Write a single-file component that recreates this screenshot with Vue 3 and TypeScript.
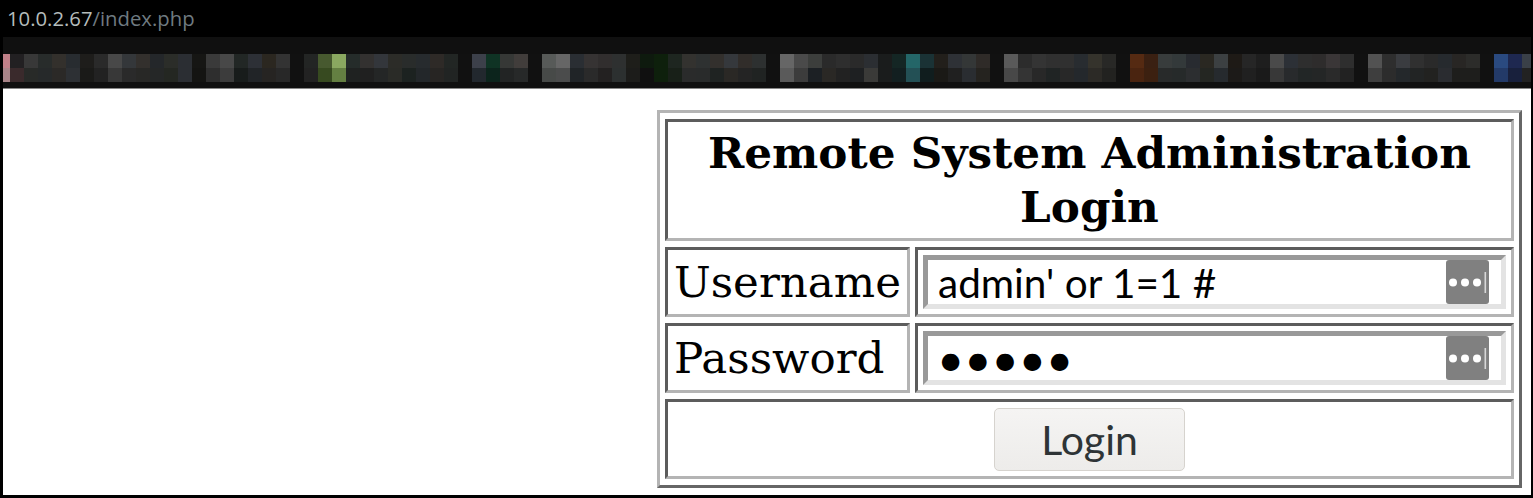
<script setup lang="ts">
const tabColumns: [string, string][] = [
  ['#222022', '#3a2a2c'], ['#383838', '#282a28'], ['#282c2b', '#26292a'], ['#33302c', '#2b2927'],
  ['#282c30', '#2d3034'], ['#1e1d1b', '#1a1a18'], ['#2a2a2a', '#222222'], ['#484848', '#383838'],
  ['#34373a', '#2a2a2a'], ['#33302d', '#282826'], ['#24272a', '#252727'], ['#2b2d29', '#242722'],
  ['#2b2e33', '#2b2e33'], ['#161614', '#141412'], ['#3a3a3a', '#2e2e2e'], ['#484848', '#3c3c3c'],
  ['#222725', '#181c1b'], ['#2d3036', '#212427'], ['#2b2720', '#262422'], ['#333333', '#282828'],
  ['#111111', '#111111'], ['#232524', '#222222'], ['#47592f', '#374a20'], ['#8aa860', '#647f42'],
  ['#252c2a', '#1f2221'], ['#333130', '#202020'], ['#33363b', '#242626'], ['#2c2c28', '#2a2b27'],
  ['#292c2b', '#1c2220'], ['#272b2e', '#23272a'], ['#2e2a27', '#272523'], ['#222624', '#212423'],
  ['#111111', '#111111'], ['#3c404a', '#22282e'], ['#0f3324', '#0c241c'], ['#363836', '#222424'],
  ['#413d3b', '#272929'], ['#111111', '#111111'], ['#575a58', '#474a48'], ['#666666', '#4b4c4c'],
  ['#2a2e33', '#202427'], ['#363333', '#2a2a2a'], ['#312e2e', '#232121'], ['#2e3030', '#2c3030'],
  ['#1e1e1a', '#1c1c1a'], ['#0e1a0e', '#101010'], ['#0e200c', '#0e200c'], ['#1e2620', '#182018'],
  ['#33322f', '#2a2b2b'], ['#2e3131', '#292b2b'], ['#33302d', '#1f2322'], ['#35383c', '#2a2825'],
  ['#312d2a', '#242424'], ['#2d3030', '#202322'], ['#111111', '#111111'], ['#666666', '#5a5a5a'],
  ['#4a4a4a', '#3c3c3c'], ['#3c3e3c', '#1c2024'], ['#2a2a2a', '#2a2825'], ['#2e2e2e', '#222222'],
  ['#2a2a2a', '#1e2022'], ['#2b2e32', '#3a3a38'], ['#1a1c1c', '#1a1c1c'], ['#142624', '#121f20'],
  ['#246668', '#235055'], ['#1a3235', '#101d1e'], ['#221f1b', '#1a1916'], ['#2e3136', '#202020'],
  ['#343737', '#2a2d31'], ['#2f2b28', '#25231f'], ['#111111', '#111111'], ['#5a5a5a', '#484848'],
  ['#2c2c2c', '#343434'], ['#343434', '#282828'], ['#303030', '#202424'], ['#303030', '#282828'],
  ['#282c30', '#24282c'], ['#35332c', '#2c2a26'], ['#282826', '#222220'], ['#111111', '#111111'],
  ['#552a12', '#4a2410'], ['#3a2012', '#3c2010'], ['#383c3c', '#282a2a'], ['#33393a', '#262a2a'],
  ['#282b30', '#2c2e30'], ['#2a2822', '#242622'], ['#3c4042', '#262a2e'], ['#1e1a16', '#1c1a18'],
  ['#262626', '#202020'], ['#1e1e1e', '#1a1a1a'], ['#4a4a4a', '#383838'], ['#2c3036', '#282a2c'],
  ['#2e2e2e', '#222626'], ['#2e2c2c', '#242626'], ['#3a3637', '#2a2a2a'], ['#2e2e2e', '#222222'],
  ['#111111', '#111111'], ['#525252', '#3e3e3e'], ['#2e2e2e', '#2c2c2c'], ['#3a3c40', '#24282b'],
  ['#303030', '#222424'], ['#2a2a2a', '#222220'], ['#262a2e', '#2a2c30'], ['#282624', '#1e1e1c'],
  ['#2c2c2a', '#1e1e1c'], ['#111111', '#111111'], ['#2a4a80', '#233a68'], ['#1e2850', '#18203c'],
  ['#3a4048', '#222222'],
]
</script>

<template>
  <div class="shell">
    <div class="urlbar"><span class="host">10.0.2.67</span>/index.php</div>
    <div class="tabstrip">
      <div class="tabs">
        <div class="col first">
          <i style="background: #c08088" />
          <i style="background: #a88488" />
        </div>
        <div v-for="(col, i) in tabColumns" :key="i" class="col">
          <i :style="{ background: col[0] }" />
          <i :style="{ background: col[1] }" />
        </div>
      </div>
    </div>
    <div class="page">
      <form class="login" @submit.prevent>
        <table>
          <tbody>
            <tr>
              <th colspan="2" class="title">Remote System Administration Login</th>
            </tr>
            <tr>
              <td class="label">Username</td>
              <td class="field">
                <div class="input-wrap">
                  <input type="text" value="admin' or 1=1 #" readonly />
                  <svg class="keys" width="43" height="44" viewBox="0 0 43 44">
                    <rect width="43" height="44" rx="3" fill="#808080" />
                    <circle cx="7" cy="22.5" r="4" fill="#fff" />
                    <circle cx="19" cy="22.5" r="4" fill="#fff" />
                    <circle cx="31" cy="22.5" r="4" fill="#fff" />
                    <rect x="38.5" y="12" width="1.6" height="21" fill="#d8d8d8" />
                  </svg>
                </div>
              </td>
            </tr>
            <tr>
              <td class="label">Password</td>
              <td class="field">
                <div class="input-wrap">
                  <input class="secret" type="password" value="admin" readonly />
                  <svg class="keys" width="43" height="44" viewBox="0 0 43 44">
                    <rect width="43" height="44" rx="3" fill="#808080" />
                    <circle cx="7" cy="22.5" r="4" fill="#fff" />
                    <circle cx="19" cy="22.5" r="4" fill="#fff" />
                    <circle cx="31" cy="22.5" r="4" fill="#fff" />
                    <rect x="38.5" y="12" width="1.6" height="21" fill="#d8d8d8" />
                  </svg>
                </div>
              </td>
            </tr>
            <tr>
              <td colspan="2" class="submit">
                <button type="submit">Login</button>
              </td>
            </tr>
          </tbody>
        </table>
      </form>
    </div>
  </div>
</template>

<style>
html,
body {
  margin: 0;
  background: #000;
}
</style>

<style scoped>
.shell {
  display: flex;
  flex-direction: column;
  width: 1533px;
  height: 498px;
  overflow: hidden;
  background: #000;
}
.urlbar {
  height: 37px;
  padding-left: 7px;
  box-sizing: border-box;
  font: 20.3px/37px "Open Sans", sans-serif;
  color: #6f7a80;
}
.host {
  color: #b4bcbc;
}
.tabstrip {
  height: 51px;
  margin: 0 2px 0 3px;
  padding-top: 17px;
  box-sizing: border-box;
  background: #101010;
  overflow: hidden;
}
.tabs {
  display: flex;
}
.col {
  flex: 0 0 14px;
}
.col.first {
  flex-basis: 7px;
}
.col i {
  display: block;
  height: 14px;
}
.page {
  flex: 1;
  display: flex;
  justify-content: flex-end;
  margin: 0 2px 3px 3px;
  padding: 21px 9px 0 0;
  background: #fff;
  border-top: 1px solid #888;
  box-sizing: border-box;
}
table {
  width: 865px;
  height: 378px;
  box-sizing: border-box;
  border-style: solid;
  border-width: 3px;
  border-color: #b4b4b4 #666 #666 #b4b4b4;
  border-spacing: 5px 6px;
  font-family: "DejaVu Serif", serif;
  color: #000;
}
th,
td {
  box-sizing: border-box;
  padding: 0;
  border-style: solid;
  border-width: 3px;
  border-color: #5c5c5c #b4b4b4 #b4b4b4 #5c5c5c;
}
.title {
  height: 122px;
  padding: 0 4px;
  font-size: 43.7px;
  line-height: 54px;
  font-weight: 700;
  text-align: center;
}
.label {
  width: 245px;
  height: 70px;
  padding-left: 6px;
  font-size: 43.6px;
  white-space: nowrap;
}
.field {
  padding: 5px;
}
.input-wrap {
  position: relative;
  height: 54px;
}
input {
  display: block;
  width: 100%;
  height: 100%;
  box-sizing: border-box;
  padding: 0 0 0 10px;
  margin: 0;
  border-style: solid;
  border-width: 5px;
  border-color: #999 #e3e3e3 #e3e3e3 #999;
  outline: none;
  background: #fff;
  color: #000;
  font-family: Lato, sans-serif;
  font-size: 40.5px;
}
input.secret {
  padding-left: 9px;
  font-size: 47px;
}
.keys {
  position: absolute;
  top: 5px;
  right: 17px;
}
.submit {
  height: 80px;
  text-align: center;
}
button {
  width: 191px;
  height: 63px;
  padding: 0;
  border: 1.5px solid #d6d3ce;
  border-radius: 5px;
  background: linear-gradient(#f5f4f3, #edecea);
  color: #2e3436;
  font-family: Lato, sans-serif;
  font-size: 41px;
}
</style>
